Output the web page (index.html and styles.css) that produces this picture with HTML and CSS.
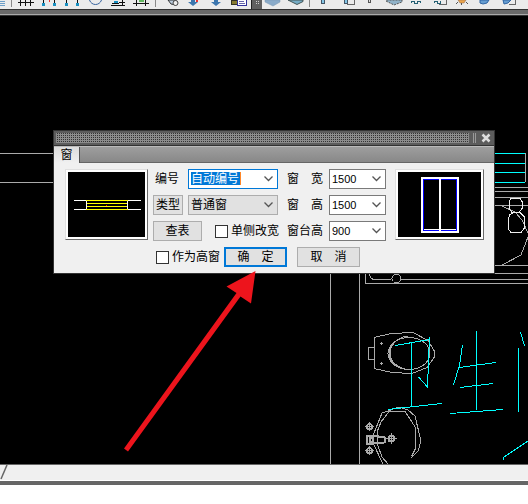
FILE: index.html
```html
<!DOCTYPE html>
<html lang="zh-CN">
<head>
<meta charset="utf-8">
<title>窗</title>
<link rel="stylesheet" href="styles.css">
</head>
<body>
<header class="toolbar" aria-label="工具栏">
  <svg class="tools" width="528" height="9" viewBox="0 0 528 9" shape-rendering="crispEdges">
    <path d="M0 1.500h5M0 3.500h5M0 5.500h5" stroke="#6d9fc8"/>
    <path d="M11.500 0v7M155.500 0v7M309.500 0v7" stroke="#888"/>
    <g fill="none" stroke="#111">
      <path d="M18 2.500h16M20.500 0v6M25.500 0v6M30.500 0v6M133 3.500h16M136.500 0v6M145.500 0v6"/>
      <path d="M43.500 0v3M54.500 0v3M66.500 0v3M77.500 0v3"/>
      <path d="M111 5.500h14M112 3.500h7M122.500 0v5M119 2.500h6"/>
    </g>
    <path d="M42 3h3v3h-3zM53 3h3v3h-3zM65 3h3v3h-3zM76 3h3v3h-3zM114 1h4v2h-4z" fill="#188fc0"/>
    <path d="M49.500 0v2" stroke="#e33"/>
    <path d="M139 0h5v2h-5z" fill="#62b95e"/>
    <path d="M89.500 0c2 6 10 6 12 0" fill="none" stroke="#36639e" shape-rendering="auto"/>
    <g shape-rendering="auto">
      <path d="M168 0l3 4 5 1v-5z" fill="#bcd" stroke="#333"/><circle cx="175.500" cy="3" r="2.500" fill="#eee" stroke="#444"/>
      <path d="M188 2h3V0h4v2h3l-5 4zM211 2h3V0h4v2h3l-5 4z" fill="#3c76ae"/>
      <path d="M196 0h2v2h-2z" fill="#e33"/>
    </g>
    <path d="M231.500 0h6v4.500h-6z" fill="#867b30" stroke="#332"/><path d="M237.500 0v5.500h9V0" fill="#fff" stroke="#32329a"/><path d="M239 1.500h5M239 3.500h6" stroke="#66a"/>
    <path d="M251 0h11v9h-11z" fill="#606060"/><path d="M251 0h1v9h-1z" fill="#222"/><path d="M256 1h1v1h-1zM258 1h1v1h-1zM256 3h1v1h-1zM258 3h1v1h-1z" fill="#ccc"/>
    <g shape-rendering="auto">
      <path d="M265 2l8 4 7-4V0h-15z" fill="#8aabc9" stroke="#7795b1" stroke-width=".5"/><path d="M288 0l9 4.500 6-3V0z" fill="#75acc5" stroke="#455"/>
      <path d="M386 1l8 4 8-3V0h-15z" fill="#91b3c9" stroke="#555" stroke-dasharray="2 1"/>
      <path d="M480 0h9l-2 3-4 1-3-1zM503 0h8l-3 3-4 1z" fill="#669dd0" stroke="#2f65a3"/>
      <path d="M458 0h8l-2 3h-4z" fill="#eda64b" stroke="#865" stroke-width=".5"/><path d="M458 2l-2 2M461.500 3v2M466 2l2 2" stroke="#555"/>
    </g>
    <path d="M346.500 4.500h8V0M438.500 4.500h8V0M508.500 4.500h7V0" fill="none" stroke="#666"/>
    <path d="M321.500 0v3.500h3V0M344.500 0v3.500h3V0" fill="#83c5e5" stroke="#456"/><path d="M368.500 0v2.500h2V0" fill="#ddd" stroke="#555"/>
    <path d="M411.500 3v-2h3v2h3v-2h3v2M434.500 3v-2h3v2h3v-2" fill="none" stroke="#245f73"/>
  </svg>
</header>
<div class="toolbar-edge"></div>
<main class="workspace">
  <svg class="drawing" width="528" height="448" viewBox="0 16 528 448" fill="none" stroke="#aaa" shape-rendering="crispEdges">
    <path d="M0 153.500H54M0 182.500H54M330.500 273V464M359.500 273V464"/>
    <path d="M525.500 153V182M494 187.500H528M494 191.500H528M494 197.500H528M494 205.500H528M494 265.500H528M494 273.500H528"/>
    <path d="M502 206l13 6 7 8 6 13v4l-7 18-19 10"/>
    <path d="M365.500 273V283.500H528M369.500 273c0 4 2 6 4 6.500H391M401 279.500H528"/>
    <circle cx="396.500" cy="278.500" r="4.500"/>
    <path stroke="#eee" d="M511 198.500h9l2 3v7l-3 4h-7l-3-4v-7zM510 214.500l4-2h6l4 4v12l-3 4h-10l-3-4v-9z"/>
    <path d="M374 337.500l17-4 22-1 15 8 6 10v7l-7 10-15 6-20-1-18-4zM374 347.500h-6v12h6"/>
    <path d="M380 343.500h3M381.500 342v3M380 363.500h3M381.500 362v3"/>
    <ellipse cx="409" cy="353.500" rx="21" ry="16"/>
    <path d="M408 336c-10 1-18 9-18 17s6 14 18 17M403 337c-8 4-14 8-14 16s6 13 13 16"/>
    <path d="M383 464l-10-21 1-10 8-20 17-6 9 3 7 6 6 25-3 10-7 7M388 464l-6-7-5-14v-11l4-10 8-10.500h16l10.500 16v21l-4 8"/>
    <path d="M366.500 435.500h6l12 2v5l-12 1h-6zM369.500 437.500h3v4h-3z" stroke-width="2"/>
    <g><circle cx="369.500" cy="426.500" r="2.500" stroke-width="2"/><path d="M365 426.500h9M369.500 422v9"/></g>
    <g><circle cx="369.500" cy="450.500" r="2.500" stroke-width="2"/><path d="M365 450.500h9M369.500 446v9"/></g>
    <g><circle cx="391.500" cy="438.500" r="3" stroke-width="2"/><path d="M386 438.500h11M391.500 433v11"/></g>
    <path stroke="#0ff" d="M494 153.500H525M494 163.500H525M494 172.500H525M494 182.500H525"/>
    <path stroke="#0ff" d="M395 345.500l35-6M411.500 343V407M429.500 337l-2 50-9-10M388 409.500l54-6M462.500 345l-3 20-6 20M459 367.500l37-5M476.500 331V410M460 387.500l33-4M450 413.500l53-4M520.500 332l4 14M518.500 348V412M528 441l-24 16-1 3"/>
  </svg>

  <form class="dialog" role="dialog" aria-label="窗">
    <div class="titlebar">
      <span class="grip"></span>
      <span class="ticks"></span>
      <button class="close" type="button" aria-label="关闭"><svg width="10" height="10" viewBox="0 0 10 10"><path d="M1.500 1.500l7 7M8.500 1.500l-7 7" stroke="#ddd" stroke-width="2.500"/></svg></button>
    </div>
    <div class="tabs"><button class="tab" type="button">窗</button></div>
    <div class="content">
      <div class="preview">
        <svg viewBox="0 0 77 65" shape-rendering="crispEdges"><path d="M6 28.500h12M6 37.500h12M60 28.500h13M60 37.500h13M18.500 28v10M59.500 28v10" stroke="#fff"/><path d="M18 28.500h42M19 31.500h40M19 34.500h40M18 37.500h42" stroke="#ff0"/><path d="M38 33h1v1h-1z" fill="red"/></svg>
      </div>
      <div class="fields">
        <div class="row">
          <label class="label code-label" for="code">编号</label>
          <select class="combo wide active" id="code"><option>自动编号</option></select>
          <label class="label spaced" for="width">窗　宽</label>
          <select class="combo number" id="width"><option>1500</option></select>
        </div>
        <div class="row">
          <button class="btn type" type="button">类型</button>
          <select class="combo wide muted" aria-label="类型"><option>普通窗</option></select>
          <label class="label spaced" for="height">窗　高</label>
          <select class="combo number" id="height"><option>1500</option></select>
        </div>
        <div class="row">
          <button class="btn lookup" type="button">查表</button>
          <label class="check side"><input type="checkbox">单侧改宽</label>
          <label class="label spaced" for="sill">窗台高</label>
          <select class="combo number" id="sill"><option>900</option></select>
        </div>
        <div class="row actions">
          <label class="check"><input type="checkbox">作为高窗</label>
          <button class="btn ok" type="submit">确　定</button>
          <button class="btn cancel" type="button">取　消</button>
        </div>
      </div>
      <div class="preview">
        <svg viewBox="0 0 83 65" shape-rendering="crispEdges" fill="none"><path d="M24 6h36v54H24z" stroke="#fff" stroke-width="2"/><path d="M25.500 7.500h33v51h-33z" stroke="#00f"/><path d="M42 6v54" stroke="#fff" stroke-width="2"/><path d="M26 57.500h32" stroke="#fff"/></svg>
      </div>
    </div>
  </form>

  <svg class="pointer" width="528" height="448" viewBox="0 16 528 448"><path d="M124 448.500L236.500 293 226.500 286.500 255.500 271 251 303.500 240.500 296.500 128 451.500z" fill="#ed141c"/></svg>
</main>
<footer class="status"><svg width="8" height="15" viewBox="0 0 8 15"><path d="M1 14L7 0" stroke="#666" stroke-width="1.500"/></svg></footer>
<div class="bottom-edge"></div>
</body>
</html>
```
FILE: styles.css
```css
* { box-sizing: border-box; }
body {
  margin: 0;
  height: 100vh;
  padding-bottom: 19px;
  display: flex;
  flex-direction: column;
  overflow: hidden;
  background: #fff;
  color: #000;
  font: 12px/14px "Liberation Sans", "Noto Sans CJK SC", sans-serif;
}
button, select, input { font: inherit; color: inherit; margin: 0; }
svg { display: block; }
.toolbar { height: 9px; background: #ebebeb; overflow: hidden; }
.toolbar-edge {
  height: 7px;
  border-top: 1px solid #333;
  border-bottom: 1px solid #333;
  background: linear-gradient(#6a6a6a 4px, #aaa 4px);
}
.workspace { flex: 1; position: relative; overflow: hidden; background: #000; }
.drawing, .pointer { position: absolute; top: 0; left: 0; }
.pointer { pointer-events: none; }
.dialog {
  position: absolute;
  top: 114px;
  left: 53px;
  border: 1px solid #333;
  background: #f0f0f0;
}
.titlebar {
  display: flex;
  align-items: center;
  gap: 4px;
  height: 15px;
  padding: 0 2px;
  background: #5c5c5c;
  border-bottom: 1px solid #333;
}
.grip {
  flex: 1;
  height: 10px;
  background: repeating-conic-gradient(#333 0 25%, #8c8c8c 0 100%) 0 0 / 2px 2px;
}
.ticks { width: 3px; height: 10px; border: solid #999; border-width: 0 1px; }
.close { border: 0; padding: 0 1px; background: none; }
.tabs {
  height: 17px;
  background: linear-gradient(#9e9e9e, #888);
  border-top: 1px solid #bbb;
  border-bottom: 1px solid #666;
}
.tab {
  display: block;
  width: 26px;
  height: 16px;
  padding: 0;
  border: 0;
  border-right: 1px solid #555;
  background: linear-gradient(#dcdcdc, #f0f0f0);
}
.content { display: flex; gap: 5px; padding: 6px 10px 6px 11px; }
.preview {
  align-self: flex-start;
  border: 1px solid;
  border-color: #e0e0e0 #6a6a6a #6a6a6a #e0e0e0;
  background: #000;
  outline: 2px solid #fff;
  outline-offset: -3px;
  padding: 2px;
}
.preview svg { width: 77px; height: 65px; }
.preview:last-child { margin-left: 4px; }
.preview:last-child svg { width: 83px; }
.fields { display: flex; flex-direction: column; gap: 6px; }
.row { display: flex; align-items: center; height: 20px; }
.label { white-space: nowrap; }
.code-label { width: 35px; padding-left: 2px; }
.spaced { width: 42px; margin-left: 9px; }
.combo {
  appearance: none;
  height: 20px;
  padding: 0 2px;
  border: 1px solid #7a7a7a;
  border-radius: 0;
  background: #fff url("data:image/svg+xml,%3Csvg xmlns='http://www.w3.org/2000/svg' width='9' height='6'%3E%3Cpath d='M.5 .5l4 4 4-4' fill='none' stroke='%23555' stroke-width='1.300'/%3E%3C/svg%3E") no-repeat right 4px center;
}
.wide { width: 90px; }
.number { width: 57px; font-size: 11px; }
.active {
  color: #fff;
  border-color: #0078d7;
  background-image: linear-gradient(90deg, #0078d7 49px, #ff8728 49px), url("data:image/svg+xml,%3Csvg xmlns='http://www.w3.org/2000/svg' width='9' height='6'%3E%3Cpath d='M.5 .5l4 4 4-4' fill='none' stroke='%23555' stroke-width='1.300'/%3E%3C/svg%3E");
  background-position: 2px 2px, right 4px center;
  background-size: 50px 13px, auto;
}
.muted { background-color: #e1e1e1; border-color: #adadad; }
.btn {
  height: 20px;
  padding: 0;
  border: 1px solid #adadad;
  background: #e1e1e1;
  white-space: nowrap;
}
.type { width: 30px; margin-right: 5px; }
.lookup { width: 49px; }
.check { display: flex; align-items: center; gap: 3px; white-space: nowrap; }
.side { margin-left: 13px; width: 63px; }
.check input {
  appearance: none;
  flex: none;
  width: 13px;
  height: 13px;
  border: 1px solid #333;
  background: #fff;
}
.check input:checked { background: #0078d7; }
.actions { padding-left: 3px; }
.ok { width: 63px; margin-left: 4px; border: 2px solid #0078d7; }
.cancel { width: 63px; margin-left: 10px; }
.status {
  height: 17px;
  border-top: 1px solid #666;
  border-bottom: 1px solid #fff;
  background: #f0f0f0;
}
.bottom-edge { height: 4px; background: #666; }
```
